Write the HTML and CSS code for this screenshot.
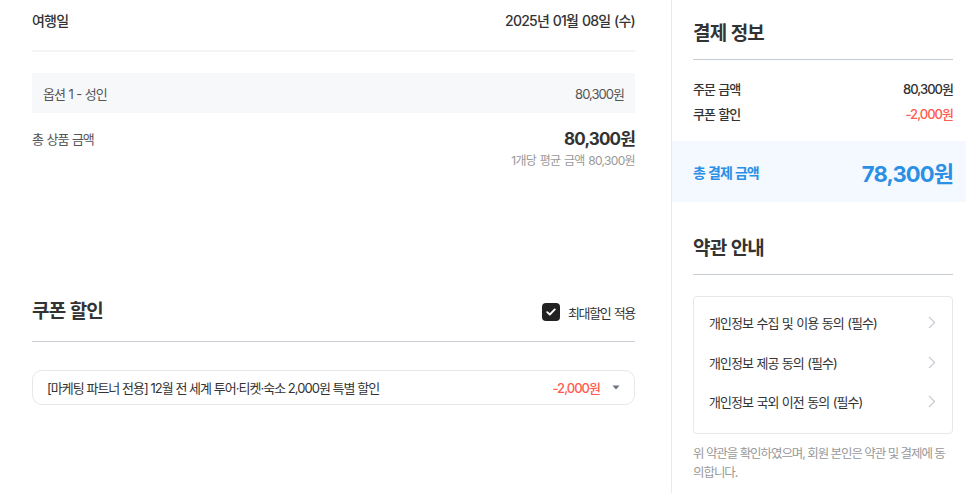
FILE: index.html
```html
<!DOCTYPE html>
<html lang="ko">
<head>
<meta charset="utf-8">
<link rel="stylesheet" href="styles.css">
</head>
<body>
<div class="page">
  <main class="main">
    <div class="trip-row">
      <span class="label-strong">여행일</span>
      <span class="label-strong">2025년 01월 08일 (수)</span>
    </div>
    <div class="option-box">
      <span>옵션 1 - 성인</span>
      <span>80,300원</span>
    </div>
    <div class="total-row">
      <span class="total-label">총 상품 금액</span>
      <div class="total-values">
        <span class="total-amount">80,300원</span>
        <span class="total-sub">1개당 평균 금액 80,300원</span>
      </div>
    </div>
    <div class="coupon-head">
      <h2 class="section-title">쿠폰 할인</h2>
      <label class="check">
        <span class="check-box">
          <svg width="10" height="8" viewBox="0 0 10 8"><path d="M1.2 4.1 L3.8 6.5 L8.8 1.4" fill="none" stroke="#fff" stroke-width="1.8" stroke-linecap="round" stroke-linejoin="round"/></svg>
        </span>
        <span>최대할인 적용</span>
      </label>
    </div>
    <div class="coupon-select">
      <span class="coupon-name">[마케팅 파트너 전용] 12월 전 세계 투어·티켓·숙소 2,000원 특별 할인</span>
      <span class="coupon-right">
        <span class="red">-2,000원</span>
        <svg width="8" height="5" viewBox="0 0 8 5"><path d="M0.5 0.5 H7.5 L4 4.5 Z" fill="#6b7280"/></svg>
      </span>
    </div>
  </main>
  <aside class="side">
    <h2 class="section-title side-title">결제 정보</h2>
    <div class="pay-rows">
      <div class="pay-row"><span>주문 금액</span><span class="pay-val">80,300원</span></div>
      <div class="pay-row"><span>쿠폰 할인</span><span class="pay-val red">-2,000원</span></div>
    </div>
    <div class="grand">
      <span class="grand-label">총 결제 금액</span>
      <span class="grand-amount">78,300원</span>
    </div>
    <h2 class="section-title side-title terms-title">약관 안내</h2>
    <ul class="terms">
      <li><span>개인정보 수집 및 이용 동의 (필수)</span><svg class="chev" width="8" height="13" viewBox="0 0 8 13"><path d="M1 1 L6.5 6.5 L1 12" fill="none" stroke="#c9cdd3" stroke-width="1.3"/></svg></li>
      <li><span>개인정보 제공 동의 (필수)</span><svg class="chev" width="8" height="13" viewBox="0 0 8 13"><path d="M1 1 L6.5 6.5 L1 12" fill="none" stroke="#c9cdd3" stroke-width="1.3"/></svg></li>
      <li><span>개인정보 국외 이전 동의 (필수)</span><svg class="chev" width="8" height="13" viewBox="0 0 8 13"><path d="M1 1 L6.5 6.5 L1 12" fill="none" stroke="#c9cdd3" stroke-width="1.3"/></svg></li>
    </ul>
    <p class="note">위 약관을 확인하였으며, 회원 본인은 약관 및 결제에 동의합니다.</p>
  </aside>
</div>
</body>
</html>
```
FILE: styles.css
```css
* { box-sizing: border-box; }
html, body { margin: 0; padding: 0; background: #fff; }
body {
  font-family: "Inter", "Noto Sans CJK KR", sans-serif;
  color: #333;
  font-size: 13px;
  letter-spacing: -0.075em;
  word-spacing: 0.06em;
  overflow: hidden;
}
.page {
  display: flex;
  align-items: flex-start;
  height: 493px;
}
.main {
  width: 603px;
  margin-left: 32px;
  margin-right: 36px;
  flex-shrink: 0;
}
.trip-row {
  display: flex;
  justify-content: space-between;
  align-items: flex-start;
  height: 52px;
  padding-top: 11px;
  border-bottom: 2px solid #f3f4f6;
  margin-bottom: 21px;
}
.label-strong {
  font-size: 14px;
  font-weight: 500;
  color: #333;
  line-height: 20px;
  letter-spacing: -0.055em;
}
.option-box {
  display: flex;
  justify-content: space-between;
  align-items: center;
  height: 40px;
  background: #f7f8fa;
  padding: 0 11px;
  color: #555;
  font-size: 13px;
}
.total-row {
  display: flex;
  justify-content: space-between;
  align-items: flex-start;
  margin-top: 15px;
}
.total-label {
  color: #555;
  font-size: 13px;
  line-height: 22px;
}
.total-values {
  display: flex;
  flex-direction: column;
  align-items: flex-end;
}
.total-amount {
  font-size: 17px;
  font-weight: 700;
  color: #333;
  line-height: 22px;
  letter-spacing: -0.05em;
}
.total-sub {
  font-size: 12px;
  color: #999;
  line-height: 18px;
  margin-top: 2px;
  letter-spacing: -0.055em;
}
.coupon-head {
  display: flex;
  justify-content: space-between;
  align-items: center;
  margin-top: 127px;
  padding-bottom: 14px;
  border-bottom: 1px solid #c9ced6;
}
.section-title {
  margin: 0;
  font-size: 19px;
  font-weight: 700;
  color: #333;
  line-height: 30px;
  letter-spacing: -0.045em;
}
.check {
  display: flex;
  align-items: center;
  gap: 8px;
  font-size: 13px;
  color: #333;
  letter-spacing: -0.1em;
}
.check-box {
  width: 18px;
  height: 18px;
  border-radius: 4px;
  background: #222;
  display: flex;
  align-items: center;
  justify-content: center;
}
.coupon-select {
  margin-top: 28px;
  height: 35px;
  border: 1px solid #e5e7eb;
  border-radius: 10px;
  display: flex;
  align-items: center;
  justify-content: space-between;
  padding: 0 14px 0 14px;
}
.coupon-name { color: #333; font-size: 13px; word-spacing: 0; }
.coupon-right { display: flex; align-items: center; gap: 12px; }
.red { color: #ff5b4f; font-weight: 500; }

.side {
  flex: 1;
  border-left: 1px solid #e8eaed;
  height: 493px;
}
.side-title {
  margin: 19px 13px 0 21px;
  padding-bottom: 10px;
  border-bottom: 1px solid #c5cbd3;
}
.pay-rows {
  padding: 19px 13px 17px 21px;
  display: flex;
  flex-direction: column;
  gap: 5px;
}
.pay-row {
  display: flex;
  justify-content: space-between;
  align-items: center;
  line-height: 20px;
  font-size: 13px;
  color: #333;
  font-weight: 500;
}
.pay-val { font-weight: 500; }
.grand {
  background: #f4f9ff;
  height: 61px;
  display: flex;
  align-items: center;
  justify-content: space-between;
  padding: 0 13px 0 21px;
}
.grand-label { color: #2b8fe6; font-size: 14px; font-weight: 700; }
.grand-amount { color: #2b8fe6; font-size: 22px; font-weight: 700; letter-spacing: -0.04em; }
.terms-title { margin-top: 32px; }
.terms {
  list-style: none;
  margin: 21px 13px 0 21px;
  padding: 6px 0 11px;
  border: 1px solid #e5e7eb;
  border-radius: 4px;
}
.terms li {
  display: flex;
  justify-content: space-between;
  align-items: center;
  height: 39.5px;
  padding: 0 16px 0 15px;
  font-size: 13px;
  color: #333;
}
.note {
  margin: 10px 12px 0 21px;
  font-size: 12.5px;
  color: #999;
  line-height: 19px;
  letter-spacing: -0.085em;
  word-spacing: 0;
  word-break: break-all;
}
```
